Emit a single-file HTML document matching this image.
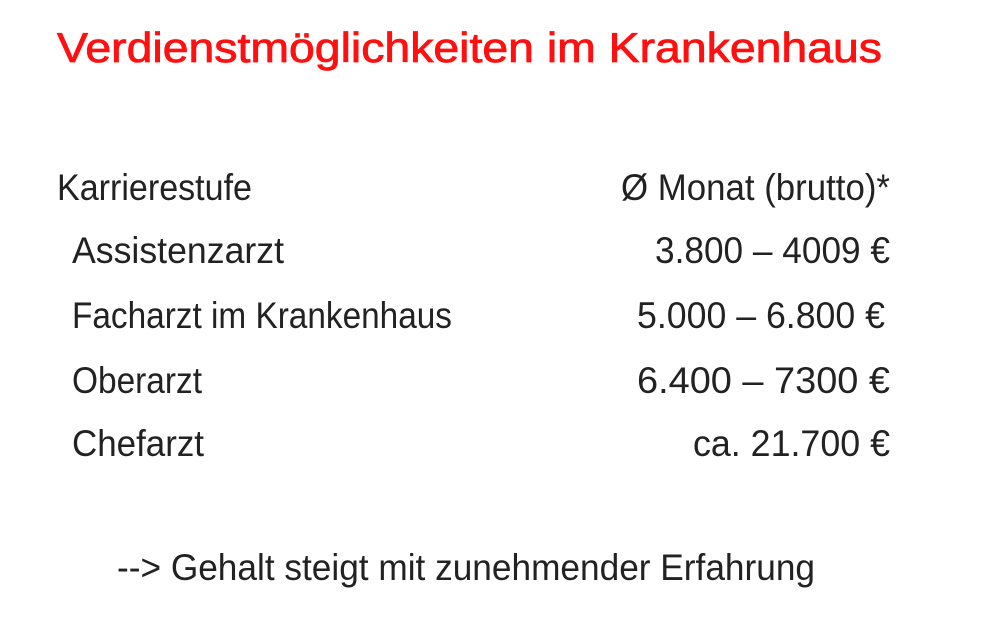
<!DOCTYPE html>
<html><head><meta charset="utf-8"><style>
html,body{margin:0;padding:0;background:#fff;width:991px;height:642px;overflow:hidden}
svg{display:block}
text{font-family:"Liberation Sans",sans-serif;fill:#222;font-size:37px}
.t{fill:#ff1010;stroke:#ff1010;stroke-width:0.8;font-size:42px}
</style></head><body>
<svg width="991" height="642" viewBox="0 0 991 642">
<text class="t" x="57" y="62" textLength="825" lengthAdjust="spacingAndGlyphs">Verdienstmöglichkeiten im Krankenhaus</text>
<text x="57" y="200" textLength="195" lengthAdjust="spacingAndGlyphs">Karrierestufe</text>
<text x="621" y="200" textLength="269" lengthAdjust="spacingAndGlyphs">Ø Monat (brutto)*</text>
<text x="72" y="263" textLength="212" lengthAdjust="spacingAndGlyphs">Assistenzarzt</text>
<text x="655" y="263" textLength="235" lengthAdjust="spacingAndGlyphs">3.800 – 4009 €</text>
<text x="72" y="328" textLength="380" lengthAdjust="spacingAndGlyphs">Facharzt im Krankenhaus</text>
<text x="637" y="328" textLength="248" lengthAdjust="spacingAndGlyphs">5.000 – 6.800 €</text>
<text x="72" y="393" textLength="130" lengthAdjust="spacingAndGlyphs">Oberarzt</text>
<text x="637" y="393" textLength="253" lengthAdjust="spacingAndGlyphs">6.400 – 7300 €</text>
<text x="72" y="456" textLength="132" lengthAdjust="spacingAndGlyphs">Chefarzt</text>
<text x="693" y="456" textLength="197" lengthAdjust="spacingAndGlyphs">ca. 21.700 €</text>
<text x="117" y="580" textLength="698" lengthAdjust="spacingAndGlyphs">--&gt; Gehalt steigt mit zunehmender Erfahrung</text>
</svg>
</body></html>
